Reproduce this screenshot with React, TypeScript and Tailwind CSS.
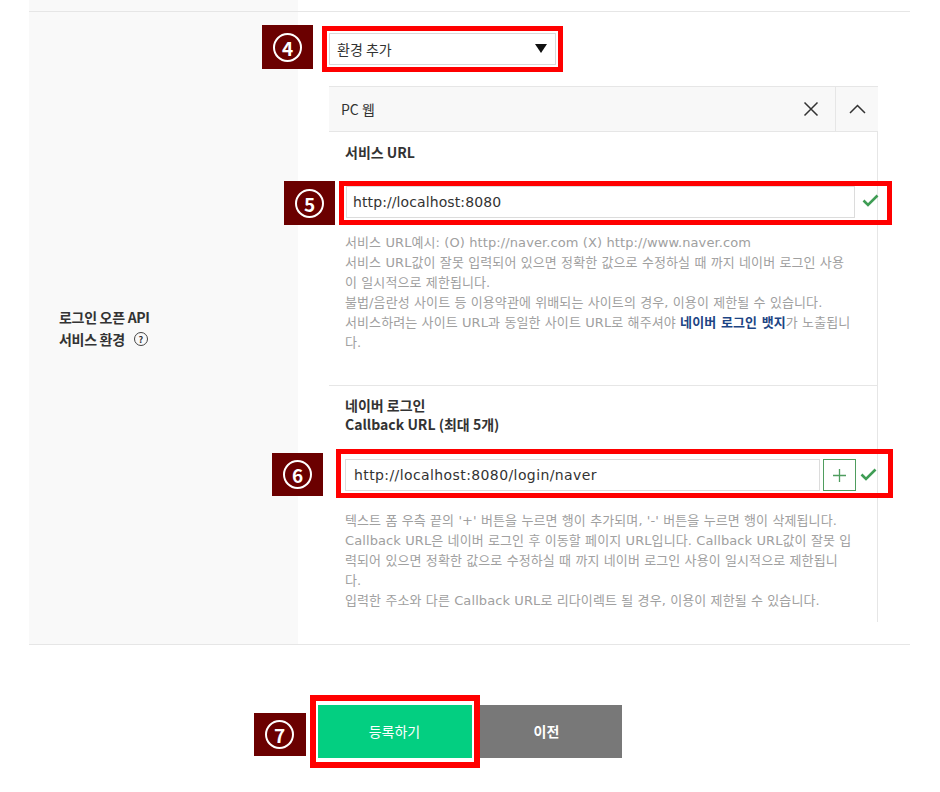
import React from 'react'

// numbered annotation badge (maroon box + circled digit)
const Badge = ({ n, className }: { n: number; className?: string }) => (
  <div className={`absolute flex items-center justify-center bg-[#6b0000] ${className ?? ''}`}>
    <div className="flex h-[29px] w-[29px] items-center justify-center rounded-full border-2 border-white text-[19px] font-bold leading-none text-white">
      {n}
    </div>
  </div>
)

const Check = () => (
  <svg width="17" height="13" viewBox="0 0 17 13" className="shrink-0">
    <polyline points="1.5,6.5 6,11 15.5,1.5" fill="none" stroke="#3f9d55" strokeWidth="2.6" />
  </svg>
)

const helpLine = 'whitespace-nowrap'
const helpBox =
  "pl-[16px] font-['DejaVu_Sans','Noto_Sans_CJK_KR',sans-serif] text-[13px] leading-[20px] tracking-[0.1px] text-[#a0a0a0]"

export default function App() {
  return (
    <div className="h-[792px] w-[940px] bg-white font-['Noto_Sans_CJK_KR',sans-serif] text-[#333]">
      <div className="ml-[29px] w-[881px]">
        {/* top strip */}
        <div className="flex h-[12px] border-b border-[#e6e6e6]">
          <div className="w-[269px] bg-[#f9f9f9]" />
        </div>

        <div className="flex border-b border-[#e6e6e6]">
          {/* label column */}
          <div className="flex w-[269px] items-center bg-[#f9f9f9] pl-[30px]">
            <div className="text-[14px] font-bold leading-[22px] tracking-[-0.3px] text-[#333]">
              <div>로그인 오픈 API</div>
              <div className="flex items-center">
                서비스 환경
                <span className="ml-[9px] flex h-[14px] w-[14px] items-center justify-center rounded-full border-[1.5px] border-[#444] text-[9px] font-bold leading-none">
                  ?
                </span>
              </div>
            </div>
          </div>

          {/* content column */}
          <div className="flex-1 pb-[22px] pt-[14px]">
            <div className="relative ml-[24px] w-fit border-[5px] border-[#ff0000] p-[2px]">
              <Badge n={4} className="-left-[65px] -top-[6px] h-[44px] w-[51px]" />
              <div className="flex h-[32px] w-[227px] items-center justify-between border border-[#d9d9d9] bg-white pl-[7px] pr-[8px] text-[14px]">
                <span>환경 추가</span>
                <svg width="12" height="10" viewBox="0 0 12 10">
                  <polygon points="0,0 12,0 6,9" fill="#111" />
                </svg>
              </div>
            </div>

            {/* environment panel */}
            <div className="ml-[31px] mt-[14px] w-[549px]">
              <div className="flex h-[46px] items-stretch border-y border-[#e6e6e6] bg-[#f8f8f8]">
                <div className="flex flex-1 items-center pl-[12px] text-[14px]">PC 웹</div>
                <div className="flex w-[48px] items-center justify-center">
                  <svg width="16" height="16" viewBox="0 0 16 16">
                    <path d="M1.5 1.5 L14.5 14.5 M14.5 1.5 L1.5 14.5" stroke="#333" strokeWidth="1.5" />
                  </svg>
                </div>
                <div className="flex w-[43px] items-center justify-center border-l border-[#e6e6e6]">
                  <svg width="17" height="10" viewBox="0 0 17 10">
                    <path d="M1 9 L8.5 1.5 L16 9" fill="none" stroke="#333" strokeWidth="1.5" />
                  </svg>
                </div>
              </div>

              <div className="border-r border-[#e6e6e6] bg-white">
                {/* service URL */}
                <div className="border-b border-[#e6e6e6] pb-[32px] pt-[10px]">
                  <div className="pl-[16px] text-[14px] font-bold leading-[20px]">서비스 URL</div>
                  <div className="relative ml-[10px] mt-[19px] flex h-[44px] w-[553px] items-start border-[5px] border-[#ff0000] pl-[2px]">
                    <Badge n={5} className="-left-[60px] -top-[5px] h-[44px] w-[51px]" />
                    <div className="flex h-[32px] w-[509px] items-center border border-[#dcdcdc] bg-white pl-[6px] font-['DejaVu_Sans',sans-serif] text-[14px] tracking-[0.1px]">
                      http://localhost:8080
                    </div>
                    <div className="ml-[7px] mt-[8px]">
                      <Check />
                    </div>
                  </div>
                  <div className={`mt-[8px] ${helpBox}`}>
                    <div className={helpLine}>서비스 URL예시: (O) http://naver.com (X) http://www.naver.com</div>
                    <div className={helpLine}>서비스 URL값이 잘못 입력되어 있으면 정확한 값으로 수정하실 때 까지 네이버 로그인 사용</div>
                    <div className={helpLine}>이 일시적으로 제한됩니다.</div>
                    <div className={helpLine}>불법/음란성 사이트 등 이용약관에 위배되는 사이트의 경우, 이용이 제한될 수 있습니다.</div>
                    <div className={helpLine}>
                      서비스하려는 사이트 URL과 동일한 사이트 URL로 해주셔야{' '}
                      <span className="font-bold text-[#1d4584]">네이버 로그인 뱃지</span>가 노출됩니
                    </div>
                    <div className={helpLine}>다.</div>
                  </div>
                </div>

                {/* callback URL */}
                <div className="pb-[11px] pt-[10px]">
                  <div className="pl-[16px] text-[14px] font-bold leading-[19px]">
                    <div>네이버 로그인</div>
                    <div>Callback URL (최대 5개)</div>
                  </div>
                  <div className="relative ml-[7px] mt-[15px] flex h-[49px] w-[557px] items-start border-[5px] border-[#ff0000] pl-[4px] pt-[5px]">
                    <Badge n={6} className="-left-[69px] -top-[1px] h-[43px] w-[51px]" />
                    <div className="flex h-[32px] w-[475px] items-center border border-[#dcdcdc] bg-white pl-[8px] font-['DejaVu_Sans',sans-serif] text-[14px] tracking-[0.4px]">
                      http://localhost:8080/login/naver
                    </div>
                    <div className="ml-[3px] flex h-[32px] w-[33px] items-center justify-center border border-[#4f9d5f] bg-white">
                      <svg width="13" height="13" viewBox="0 0 13 13">
                        <path d="M6.5 0 V13 M0 6.5 H13" stroke="#4f9d5f" strokeWidth="1.3" />
                      </svg>
                    </div>
                    <div className="ml-[4px] mt-[9px]">
                      <Check />
                    </div>
                  </div>
                  <div className={`mt-[13px] ${helpBox}`}>
                    <div className={helpLine}>텍스트 폼 우측 끝의 '+' 버튼을 누르면 행이 추가되며, '-' 버튼을 누르면 행이 삭제됩니다.</div>
                    <div className={helpLine}>Callback URL은 네이버 로그인 후 이동할 페이지 URL입니다. Callback URL값이 잘못 입</div>
                    <div className={helpLine}>력되어 있으면 정확한 값으로 수정하실 때 까지 네이버 로그인 사용이 일시적으로 제한됩니</div>
                    <div className={helpLine}>다.</div>
                    <div className={helpLine}>입력한 주소와 다른 Callback URL로 리다이렉트 될 경우, 이용이 제한될 수 있습니다.</div>
                  </div>
                </div>
              </div>
            </div>
          </div>
        </div>

        {/* buttons */}
        <div className="flex justify-center pt-[60px]">
          <div className="relative">
            <Badge n={7} className="-left-[64px] top-[8px] h-[43px] w-[52px]" />
            <button className="h-[53px] w-[154px] bg-[#03cf81] text-[14px] text-white">등록하기</button>
            <div className="pointer-events-none absolute -bottom-[10px] -left-[8px] -right-[8px] -top-[10px] border-[6px] border-[#ff0000] shadow-[inset_0_0_0_2px_white]" />
          </div>
          <button className="h-[53px] w-[150px] bg-[#787878] text-[14px] font-bold text-white">이전</button>
        </div>
      </div>
    </div>
  )
}
